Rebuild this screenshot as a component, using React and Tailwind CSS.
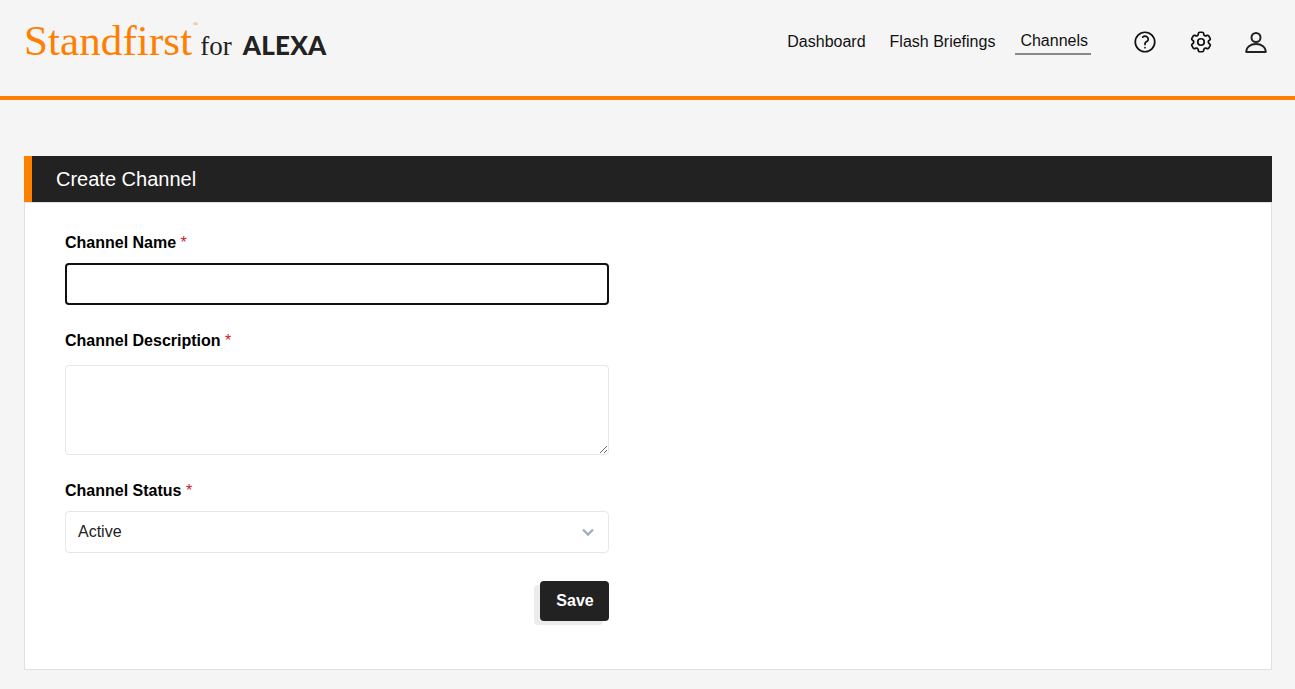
import React from "react";
import { HiOutlineCog6Tooth, HiOutlineQuestionMarkCircle } from "react-icons/hi2";

const font = { fontFamily: '"Liberation Sans", Arial, sans-serif' };

function Label({ children }) {
  return (
    <label className="block text-[16px] leading-[20px] font-bold text-black pt-[1px] -mb-[1px]">
      {children} <span className="text-[#c81e1e] font-normal text-[16px] leading-[16px]">*</span>
    </label>
  );
}

function User() {
  return (
    <svg width="24" height="24" viewBox="0 0 24 24" fill="none" stroke="#222" strokeWidth="2" strokeLinecap="round" strokeLinejoin="round">
      <circle cx="12" cy="7.5" r="4.5" />
      <path d="M2.2 21.5c0-4 4-7.5 9.8-7.5s9.8 3.5 9.8 7.5c0 .3-.2.5-.5.5H2.7c-.3 0-.5-.2-.5-.5z" />
    </svg>
  );
}

export default function App() {
  return (
    <div className="min-h-[689px] bg-[#f5f5f5] text-black" style={font}>
      <header className="h-[100px] border-b-4 border-[#ff8000] flex items-center justify-between pl-6 pr-[27px] pb-[12px]">
        <div className="flex items-baseline -mt-[3px]">
          <span className="relative text-[#ff8000] text-[43px] leading-[44px] tracking-[0.1px] font-normal" style={{ fontFamily: '"Liberation Serif", serif' }}>
            Standfirst
            <span className="absolute -right-[6px] top-[2px] text-[7px] leading-[7px] tracking-normal">®</span>
          </span>
          <span className="text-[#222] text-[27px] leading-[27px] ml-[8px]" style={{ fontFamily: '"Liberation Serif", serif' }}>for</span>
          <span className="text-[#222] text-[26px] leading-[26px] font-black ml-[11px] tracking-[0.25px]" style={{ fontFamily: 'Lato, sans-serif' }}>ALEXA</span>
        </div>
        <div className="flex items-center">
          <nav className="flex items-center text-[16px] leading-[20px] text-[#111]">
            <a className="mr-6">Dashboard</a>
            <a className="mr-5">Flash Briefings</a>
            <a className="pl-[5px] pr-[3px] pb-[2px] mt-[2px] border-b-2 border-[#888]">Channels</a>
          </nav>
          <div className="flex items-center gap-[30px] ml-[41px] -mt-[1px]">
            <HiOutlineQuestionMarkCircle size={26} color="#111" style={{ strokeWidth: 1.6 }} />
            <HiOutlineCog6Tooth size={26} color="#111" style={{ strokeWidth: 1.6 }} />
            <User />
          </div>
        </div>
      </header>

      <main className="pl-6 pr-[23px] pt-14 pb-[19px]">
        <section>
          <h1 className="h-[46px] bg-[#222222] border-l-8 border-[#ff8000] pl-6 flex items-center text-white text-[20px] leading-[24px] font-normal">
            Create Channel
          </h1>
          <div className="h-[468px] bg-white border border-[#e0e0e0] pl-10 pt-[29px]">
            <form className="w-[544px]">
              <Label>Channel Name</Label>
              <input className="block w-full h-[42px] mt-[11px] rounded-[4px] border-2 border-[#111] bg-white outline-none" />
              <div className="mt-[25px]">
                <Label>Channel Description</Label>
              </div>
              <textarea className="block w-full h-[90px] mt-[15px] rounded-[4px] border border-[#e2e8f0] bg-white outline-none" />
              <div className="mt-[25px]">
                <Label>Channel Status</Label>
              </div>
              <div className="mt-[11px] h-[42px] rounded-[4px] border border-[#e2e8f0] bg-white flex items-center justify-between pl-3 pr-[13px] text-[16px] text-[#222]">
                <span>Active</span>
                <svg width="14" height="10" viewBox="0 0 14 10" fill="none" stroke="#a0aec0" strokeWidth="2.4">
                  <path d="M2 2.5 7 7.5l5-5" />
                </svg>
              </div>
              <div className="flex justify-end mt-7">
                <button type="button" className="w-[69px] h-10 rounded-[4px] bg-[#222222] text-white font-bold text-[16px] pl-[1px] shadow-[-6px_4px_0_0_#ececec]">
                  Save
                </button>
              </div>
            </form>
          </div>
        </section>
      </main>
    </div>
  );
}
